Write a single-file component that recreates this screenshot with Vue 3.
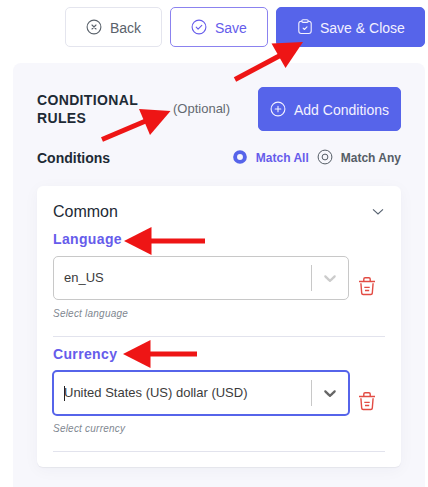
<script setup>
import { ref } from 'vue'

const match = ref('all')
const fields = [
  { name: 'Language', value: 'en_US', hint: 'Select language', focused: false },
  { name: 'Currency', value: 'United States (US) dollar (USD)', hint: 'Select currency', focused: true },
]
const arrows = [
  { line: 'M235 79.5 L282 54.5', head: '303,42 271.5,43.5 285.5,68' },
  { line: 'M102 139.5 L148 120', head: '170.5,111 139,109 150,135' },
  { line: 'M205 241 H150', head: '124,241 151.5,227 151.5,255' },
  { line: 'M197 354 H149', head: '123,354 150.5,340 150.5,368' },
]
</script>

<template>
  <main class="screen">
    <header class="toolbar">
      <button class="btn back">
        <svg class="icon" viewBox="0 0 16 16"><circle cx="8" cy="8" r="6.9" /><path d="M6 6l4 4M10 6l-4 4" /></svg>
        <span>Back</span>
      </button>
      <button class="btn save">
        <svg class="icon" viewBox="0 0 16 16"><circle cx="8" cy="8" r="6.9" /><path d="M5.2 8.2l1.9 1.9L10.8 6.4" /></svg>
        <span>Save</span>
      </button>
      <button class="btn primary close">
        <svg class="icon" viewBox="0 0 16 16"><path d="M5 2.2H4.2a2.4 2.4 0 0 0-2.4 2.4v7.5a2.4 2.4 0 0 0 2.4 2.4h7.6a2.4 2.4 0 0 0 2.4-2.4V4.6a2.4 2.4 0 0 0-2.4-2.4H11" /><rect x="4.8" y="0.8" width="6.4" height="2.6" rx="1.2" /><path d="M6.1 9.2l1.3 1.3 2.6-2.6" /></svg>
        <span>Save &amp; Close</span>
      </button>
    </header>

    <section class="panel">
      <div class="heading">
        <h2>CONDITIONAL RULES</h2>
        <span class="optional">(Optional)</span>
        <button class="btn primary add">
          <svg class="icon" viewBox="0 0 16 16"><circle cx="8" cy="8" r="6.9" /><path d="M8 5.2v5.6M5.2 8h5.6" /></svg>
          <span>Add Conditions</span>
        </button>
      </div>

      <div class="conditions">
        <h3>Conditions</h3>
        <div class="match" :class="{ active: match === 'all' }" @click="match = 'all'">
          <svg class="radio" viewBox="0 0 16 16"><circle v-if="match === 'all'" cx="8" cy="8" r="4.9" stroke-width="3.9" /><g v-else><circle cx="8" cy="8" r="6.9" /><circle cx="8" cy="8" r="2.9" /></g></svg>
          <span>Match All</span>
        </div>
        <div class="match" :class="{ active: match === 'any' }" @click="match = 'any'">
          <svg class="radio" viewBox="0 0 16 16"><circle v-if="match === 'any'" cx="8" cy="8" r="4.9" stroke-width="3.9" /><g v-else><circle cx="8" cy="8" r="6.9" /><circle cx="8" cy="8" r="2.9" /></g></svg>
          <span>Match Any</span>
        </div>
      </div>

      <div class="card">
        <div class="group">
          <span>Common</span>
          <svg class="collapse" viewBox="0 0 12 8"><path d="M1 1.3l5 4.7 5-4.7" /></svg>
        </div>
        <div v-for="field in fields" :key="field.name" class="field">
          <h4>{{ field.name }}</h4>
          <div class="row">
            <div class="select" :class="{ focused: field.focused }">
              <span class="caret"></span>
              <span class="value">{{ field.value }}</span>
              <span class="separator"></span>
              <svg class="chevron" viewBox="0 0 20 20"><path d="M4.516 7.548c0.436-0.446 1.043-0.481 1.576 0l3.908 3.747 3.908-3.747c0.533-0.481 1.141-0.446 1.574 0 0.436 0.445 0.408 1.197 0 1.615-0.406 0.418-4.695 4.502-4.695 4.502-0.217 0.223-0.502 0.335-0.787 0.335s-0.57-0.112-0.789-0.335c0 0-4.287-4.084-4.695-4.502s-0.436-1.17 0-1.615z" /></svg>
            </div>
            <svg class="trash" viewBox="0 0 18 20"><path d="M1 5.5h16M5.8 5V3q0-1.3 1.3-1.3h3.8q1.3 0 1.3 1.3v2M2.9 7.3l.8 9.8q.1 1.4 1.5 1.4h7.6q1.4 0 1.5-1.4l.8-9.8M6.3 11.4h5.4M7 14.5h4.2" /></svg>
          </div>
          <p>{{ field.hint }}</p>
        </div>
      </div>
    </section>

    <svg class="arrows" viewBox="0 0 428 487">
      <g v-for="arrow in arrows" :key="arrow.line">
        <path :d="arrow.line" />
        <polygon :points="arrow.head" />
      </g>
    </svg>
  </main>
</template>

<style>
body { margin: 0; background: #fff; overflow: hidden; }
</style>

<style scoped>
* { box-sizing: border-box; }
.screen {
  position: relative;
  width: 428px;
  height: 487px;
  overflow: hidden;
  padding: 7px 3px 0 13px;
  font-family: "Liberation Sans", Arial, sans-serif;
  color: #1d2a35;
}
svg { display: block; fill: none; flex: none; }
h2, h3, h4, p { margin: 0; }
.toolbar { display: flex; justify-content: flex-end; gap: 8px; }
.btn {
  display: flex;
  align-items: center;
  gap: 8px;
  height: 40px;
  padding: 2px 0 0 20px;
  border: 1px solid #e4e5ee;
  border-radius: 5px;
  background: #fff;
  color: #5a626b;
  font: 14px/18px "Liberation Sans", Arial, sans-serif;
  white-space: nowrap;
}
.icon { width: 16px; height: 16px; stroke: currentColor; stroke-width: 1.1; stroke-linecap: round; stroke-linejoin: round; margin-top: -2px; }
.back { width: 97px; }
.save { width: 98px; border-color: #8b82ef; color: #665ceb; }
.primary { width: 149px; border-color: #5664ea; background: #5664ea; color: #f3f1ff; }
.close { gap: 7px; }
.panel {
  height: 424px;
  margin-top: 16px;
  padding: 24px 24px 0;
  border-radius: 8px 8px 0 0;
  background: #f7f7fc;
}
.heading { display: flex; align-items: center; height: 44px; }
h2 { width: 136px; font-size: 14px; line-height: 18px; letter-spacing: .35px; }
.optional { flex: 1; font-size: 13px; line-height: 16px; color: #646970; }
.add { width: 143px; height: 44px; padding-left: 11px; }
.conditions { display: flex; align-items: center; height: 18px; margin-top: 18px; }
h3 { flex: 1; font-size: 14px; line-height: 18px; }
.match { display: flex; align-items: center; gap: 8px; margin-left: 8px; font-size: 12px; line-height: 16px; font-weight: bold; color: #555d66; white-space: nowrap; }
.radio { width: 16px; height: 16px; stroke: currentColor; margin-top: -2px; }
.active { color: #665ceb; }
.active .radio { color: #5664ea; }
.card {
  height: 281px;
  margin-top: 19px;
  padding: 16px 16px 0;
  border-radius: 6px;
  background: #fff;
  box-shadow: 0 1px 1px rgba(30, 41, 53, .06), 0 3px 16px rgba(30, 41, 70, .04);
}
.group { display: flex; align-items: center; justify-content: space-between; height: 20px; font-size: 16px; line-height: 20px; }
.collapse { width: 12px; height: 8px; margin-right: 1px; stroke: #566170; stroke-width: 1.1; }
.field { height: 115px; border-bottom: 1px solid #e2e3ed; }
h4 { padding-top: 8px; font-size: 14px; line-height: 18px; letter-spacing: .35px; color: #665ceb; }
.row { display: flex; align-items: center; height: 44px; margin-top: 8px; }
.select { display: flex; align-items: center; flex: none; width: 296px; height: 44px; padding: 0 8px 0 10px; border: 1px solid #c8c8c8; border-radius: 5px; background: #fff; }
.caret { width: 1px; height: 15px; margin-right: -1px; }
.value { flex: 1; font-size: 13px; line-height: 16px; color: #3b3b3b; }
.separator { width: 1px; height: 26px; background: #c8c8c8; }
.chevron { width: 20px; height: 20px; margin-left: 8px; fill: #ccc; }
.focused { width: 298px; height: 46px; margin: 0 -1px; border: 2px solid #5664ea; }
.focused .caret { background: #222; }
.focused .chevron { fill: #666; }
.trash { width: 18px; height: 20px; margin: 16px 0 0 9px; stroke: #e24b43; stroke-width: 1.4; }
p { margin-top: 7px; font-size: 10px; line-height: 13px; letter-spacing: .22px; font-style: italic; color: #808790; }
.arrows { position: absolute; inset: 0; width: 428px; height: 487px; pointer-events: none; stroke: #ee1515; stroke-width: 5; }
.arrows polygon { fill: #ee1515; stroke: none; }
</style>
